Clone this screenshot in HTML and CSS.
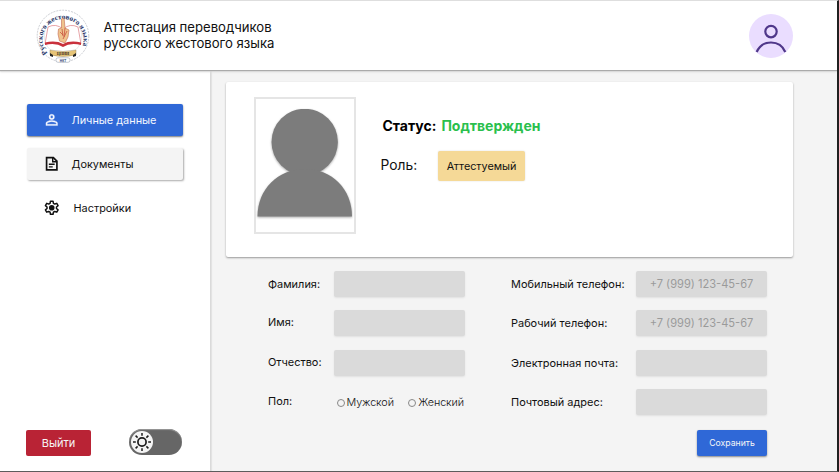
FILE: index.html
```html
<!DOCTYPE html>
<html lang="ru">
<head>
<meta charset="utf-8">
<title>Аттестация переводчиков</title>
<link rel="stylesheet" href="styles.css">
</head>
<body>
<div class="app">
  <header class="header">
    <svg class="logo" viewBox="0 0 54 54">
      <defs><path id="ring" d="M11.500 44A20.500 20.500 0 1 1 42.500 44"/></defs>
      <circle cx="27" cy="27" r="25.800" fill="#fff" stroke="#a9adb5" stroke-width=".6" stroke-dasharray="2 1"/>
      <circle cx="27" cy="27" r="18.800" fill="none" stroke="#c5c8ce" stroke-width=".4"/>
      <text class="logo-ring"><textPath href="#ring">Русского жестового языка</textPath></text>
      <path d="M12 18Q20 14 27 20Q34 14 42 18L45 35Q34 32 27 36Q20 32 9 35Z" fill="#fff" stroke="#dc7d83" stroke-width=".7"/>
      <path d="M9 33.500Q20 31 27 35Q34 31 45 33.500V36Q34 33.500 27 38Q20 33.500 9 36Z" fill="#c9303c"/>
      <path d="M25.500 10Q27 8 28.200 10L29 19L33 21L32 28L29 34L23.500 32L22 25L22.500 20L25.500 19Z" fill="#efc38d" stroke="#c56a50" stroke-width=".6"/>
      <path d="M26 20L27 27M29 19L28 28M31 22L27 30M24 23L27 26" fill="none" stroke="#c8503e" stroke-width=".8"/>
      <path d="M14 41Q27 44 40 41V46Q27 49 14 46Z" fill="#e6c477" stroke="#8b7950" stroke-width=".4"/>
      <path d="M14 44L17 46V48L14 47ZM40 44L37 46V48L40 47Z" fill="#262626"/>
      <text class="logo-band" x="27" y="46.200">ЦНИИ</text>
      <rect x="20" y="48.800" width="14" height="4.500" rx="2" fill="#fff" stroke="#8992a4" stroke-width=".5"/>
      <text class="logo-foot" x="27" y="52.500">НКТ</text>
    </svg>
    <div class="title"><span>Аттестация переводчиков</span><br><span>русского жестового языка</span></div>
    <svg class="user" viewBox="0 0 44 44">
      <circle cx="22" cy="22" r="22" fill="#eaddff"/>
      <circle cx="22" cy="17.600" r="5.700" fill="none" stroke="#4f378a" stroke-width="2.200"/>
      <path d="M7.700 38C13 25.300 31 25.300 36.300 38" fill="none" stroke="#4f378a" stroke-width="2.200"/>
    </svg>
  </header>
  <div class="body">
    <aside class="sidebar">
      <nav class="nav">
        <a class="item active">
          <svg class="icon" viewBox="0 0 24 24" fill="currentColor" stroke="currentColor" stroke-width=".5"><path d="M12 3.500a4.200 4.200 0 1 0 0 8.400 4.200 4.200 0 0 0 0-8.400zm0 2.100a2.100 2.100 0 1 1 0 4.200 2.100 2.100 0 0 1 0-4.200zM12 13c-3 0-9 1.300-9 4.300V21h18v-3.700c0-3-6-4.300-9-4.300zm7 6H5v-1.500c0-1 4-2.400 7-2.400s7 1.400 7 2.400z"/></svg>
          <span>Личные данные</span>
        </a>
        <a class="item raised">
          <svg class="icon" viewBox="0 0 24 24" fill="none" stroke="currentColor" stroke-width="2.600"><path d="M4 2.500h10.500L20 8v13.500H4z"/><path d="M13.500 2.500v6.500h6.500M7.500 12.800h9M7.500 16.800h6" stroke-width="2.200"/></svg>
          <span>Документы</span>
        </a>
        <a class="item plain">
          <svg class="icon" viewBox="0 0 24 24" fill="none" stroke="currentColor" stroke-width="2.300" stroke-linejoin="round"><path d="M10 1.800h4l.6 3.300 2.100 1.200 3.100-1.100 2 3.500-2.500 2.100v2.400l2.500 2.100-2 3.500-3.100-1.100-2.100 1.200-.6 3.300h-4l-.6-3.300-2.100-1.200-3.100 1.100-2-3.500 2.500-2.100v-2.400L2.200 8.700l2-3.500 3.100 1.100 2.100-1.200z"/><circle cx="12" cy="12" r="3.200" fill="currentColor"/></svg>
          <span class="settings">Настройки</span>
        </a>
      </nav>
      <div class="side-foot">
        <button class="logout">Выйти</button>
        <div class="toggle">
          <svg class="knob" viewBox="0 0 22 22"><circle cx="11" cy="11" r="11" fill="#f4f4f4"/><circle cx="11" cy="11" r="4.100" fill="none" stroke="#1c1c1c" stroke-width="1.700"/><path d="M11 2v2.800M11 17.200V20M2 11h2.800M17.200 11H20M4.600 4.600l2 2M15.400 15.400l2 2M17.400 4.600l-2 2M4.600 17.400l2-2" stroke="#1c1c1c" stroke-width="1.500"/></svg>
        </div>
      </div>
    </aside>
    <main class="main">
      <section class="card">
        <div class="photo">
          <svg class="person" viewBox="0 0 96 110"><circle cx="47.700" cy="33" r="33.200"/><path d="M.5 107.500C.5 80 21 60 48 60S95 80 95 107.500Z"/></svg>
        </div>
        <div class="info">
          <div class="status"><span>Статус:</span><span class="status-value">Подтвержден</span></div>
          <div class="role"><span class="role-key">Роль:</span><span class="badge">Аттестуемый</span></div>
        </div>
      </section>
      <form class="form">
        <div class="column left">
          <div class="row"><label>Фамилия:</label><div class="field"></div></div>
          <div class="row"><label class="up">Имя:</label><div class="field"></div></div>
          <div class="row"><label class="up">Отчество:</label><div class="field"></div></div>
          <div class="row"><label class="up">Пол:</label>
            <div class="radios"><span class="radio"><i class="dot"></i>Мужской</span><span class="radio"><i class="dot"></i>Женский</span></div>
          </div>
        </div>
        <div class="column right">
          <div class="row"><label>Мобильный телефон:</label><div class="field">+7 (999) 123-45-67</div></div>
          <div class="row"><label>Рабочий телефон:</label><div class="field">+7 (999) 123-45-67</div></div>
          <div class="row"><label>Электронная почта:</label><div class="field"></div></div>
          <div class="row"><label>Почтовый адрес:</label><div class="field"></div></div>
          <button class="save" type="button">Сохранить</button>
        </div>
      </form>
    </main>
  </div>
</div>
</body>
</html>
```
FILE: styles.css
```css
* { box-sizing: border-box; }
body { margin: 0; font-family: Inter, "Liberation Sans", sans-serif; color: #111; }
button { border: 0; padding: 0; font-family: inherit; color: #f6f6f6; }
.app {
  width: 839px; height: 472px; overflow: hidden;
  display: flex; flex-direction: column;
  background: #f4f4f4;
  border-top: 1px solid #dedede;
  border-right: 2px solid #202020;
  border-bottom: 1px solid #5c5c5c;
}
.header {
  height: 69px; flex: none; display: flex; align-items: center;
  padding: 0 44px 0 36px; background: #fff;
  box-shadow: 0 1px 1px #aaa, 0 2px 2px #ddd; z-index: 1;
}
.logo { width: 54px; height: 54px; overflow: visible; }
.logo-ring { font: bold 7.200px "Liberation Serif", serif; fill: #1f3568; }
.logo-band { font: bold 4px "Liberation Serif", serif; fill: #383323; text-anchor: middle; }
.logo-foot { font: bold 3.200px "Liberation Sans", sans-serif; fill: #263d70; text-anchor: middle; }
.title { margin: -1px 0 0 13.500px; font-size: 13.120px; line-height: 16px; white-space: nowrap; }
.user { width: 44px; height: 44px; margin-left: auto; }
.body { flex: 1; display: flex; min-height: 0; }
.sidebar {
  width: 211px; flex: none; background: #fff; border-right: 1px solid #dadada;
  box-shadow: 1px 0 1px #e3e3e3;
  padding: 34px 27px 15px 26px;
  display: flex; flex-direction: column; justify-content: space-between;
}
.nav { display: flex; flex-direction: column; gap: 12px; padding-left: 1px; }
.item { height: 32px; width: 156px; display: flex; align-items: center; padding-left: 17px; font-size: 10.900px; border-radius: 2px; white-space: nowrap; }
.icon { width: 15.500px; height: 15.500px; margin-right: 12px; }
.active { background: #2f68d7; color: #f4f7ff; box-shadow: 0 1px 2px #777; }
.raised { background: #f4f4f4; box-shadow: 1px 1px 2px #aaa; }
.settings { margin-left: 2px; }
.side-foot { display: flex; align-items: center; justify-content: space-between; padding-right: 1px; }
.logout { width: 65px; height: 26px; background: #b92335; border-radius: 2px; font-size: 11px; }
.toggle { width: 53px; height: 26px; margin-top: -2px; border-radius: 13px; background: #666; display: flex; align-items: center; padding-left: 2px; box-shadow: inset 0 1px 1px #999; }
.knob { width: 22px; height: 22px; }
.main { flex: 1; padding: 12px 44px 0 14.500px; }
.card { width: 567.500px; height: 175px; background: #fff; border-radius: 2px; box-shadow: 0 1px 2px #999; padding: 15px 28px; display: flex; }
.photo { width: 102px; height: 137px; border: 2px solid #e5e5e5; padding: 10px 1px 0 1px; flex: none; }
.person { display: block; width: 96px; height: 110px; fill: #7c7c7c; filter: drop-shadow(0 1px 1px #aaa); }
.info { margin-left: 25.500px; padding-top: 20px; }
.status { font-size: 14px; font-weight: 700; line-height: 18px; display: flex; gap: 5px; padding-left: 1.500px; color: #000; }
.status-value { color: #2abf4d; }
.role { display: flex; align-items: center; margin-top: 16px; }
.role-key { width: 57px; font-size: 13.800px; margin: -3px 0 0 -.5px; flex: none; }
.badge { width: 87px; height: 30px; margin-left: .5px; background: #f5d997; border-radius: 2px; display: flex; align-items: center; justify-content: center; font-size: 10.800px; box-shadow: 0 0 2px #ddd; }
.form { display: flex; padding: 14px 0 0 42.500px; }
.column { display: flex; flex-direction: column; gap: 13.300px; }
.left { width: 197px; margin-right: 46px; }
.right { width: 256px; }
.row { display: flex; align-items: center; justify-content: space-between; height: 26px; font-size: 10.950px; white-space: nowrap; }
.up { padding-bottom: 2px; }
.field { width: 131px; height: 26px; flex: none; background: #dadada; border-radius: 2px; box-shadow: 0 1px 2px #e0e0e0; color: #9a9a9a; display: flex; align-items: center; justify-content: center; font-size: 11.100px; }
.radios { width: 131px; display: flex; justify-content: space-between; padding: 2px 1px 0 2.500px; font-size: 10.800px; font-weight: 300; letter-spacing: -.1px; }
.radio { display: flex; align-items: center; gap: 2px; }
.dot { width: 8px; height: 8px; border: 1px solid #888; border-radius: 50%; }
.save { align-self: flex-end; width: 70px; height: 26px; margin-top: 1.800px; background: #2f68d7; border-radius: 2px; font-size: 8.700px; box-shadow: 0 1px 2px #888; }
```
